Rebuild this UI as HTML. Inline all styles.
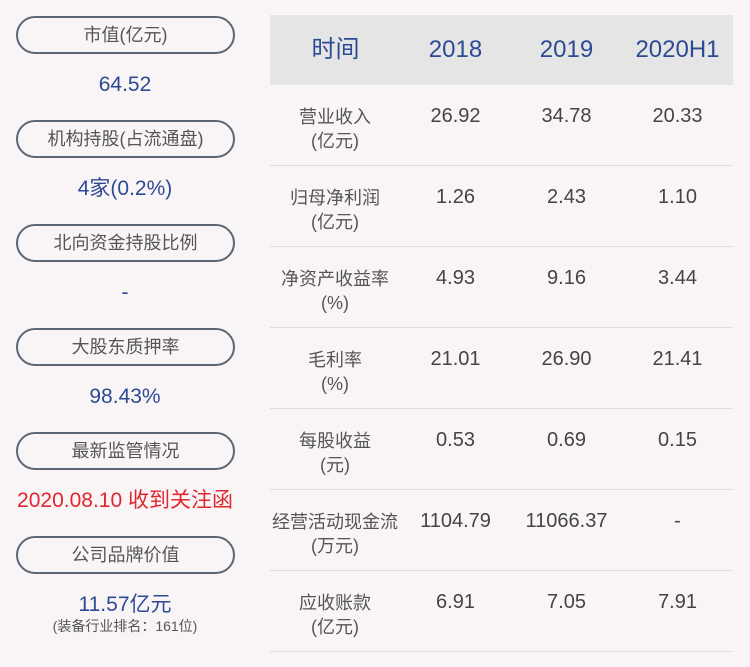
<!DOCTYPE html>
<html><head><meta charset="utf-8"><style>
body{margin:0;width:750px;height:667px;background:#f9f5f6;font-family:"Liberation Sans","Noto Sans CJK SC",sans-serif;position:relative;overflow:hidden}
.pill{position:absolute;left:16px;width:215px;height:34px;border:2px solid #5d6675;border-radius:19px;text-align:center;line-height:34px;font-size:18px;color:#555}
.val{position:absolute;left:0;width:250px;text-align:center;font-size:21px;line-height:24px;color:#2d4a94}
.hd{position:absolute;left:270px;top:15px;width:463px;height:70px;background:#e5e5e5}
.c{position:absolute;text-align:center;width:111px;line-height:30px}
.h{font-size:24px;color:#2d4a94;top:35px}
.row{position:absolute;left:270px;width:463px;height:80px;border-bottom:1px solid #e0dcdd}
.lab{position:absolute;left:0;width:130px;top:20px;text-align:center;font-size:18px;color:#555;line-height:24px}
.n{position:absolute;top:19px;width:111px;text-align:center;font-size:20px;line-height:24px;color:#444}
</style></head><body>
<div class="pill" style="top:16px">市值(亿元)</div>
<div class="val" style="top:73px">64.52</div>
<div class="pill" style="top:120px">机构持股(占流通盘)</div>
<div class="val" style="top:177px">4家(0.2%)</div>
<div class="pill" style="top:224px">北向资金持股比例</div>
<div class="val" style="top:281px">-</div>
<div class="pill" style="top:328px">大股东质押率</div>
<div class="val" style="top:385px">98.43%</div>
<div class="pill" style="top:432px">最新监管情况</div>
<div class="val" style="top:489px;color:#e0262e">2020.08.10 收到关注函</div>
<div class="pill" style="top:536px">公司品牌价值</div>
<div class="val" style="top:593px">11.57亿元</div>
<div class="val" style="top:617px;font-size:14px;line-height:18px;color:#555">(装备行业排名：161位)</div>
<div class="hd"></div>
<div class="c h" style="left:280px">时间</div>
<div class="c h" style="left:400px">2018</div>
<div class="c h" style="left:511px">2019</div>
<div class="c h" style="left:622px">2020H1</div>
<div class="row" style="top:85px"><div class="lab">营业收入<br>(亿元)</div><div class="n" style="left:130px">26.92</div><div class="n" style="left:241px">34.78</div><div class="n" style="left:352px">20.33</div></div>
<div class="row" style="top:166px"><div class="lab">归母净利润<br>(亿元)</div><div class="n" style="left:130px">1.26</div><div class="n" style="left:241px">2.43</div><div class="n" style="left:352px">1.10</div></div>
<div class="row" style="top:247px"><div class="lab">净资产收益率<br>(%)</div><div class="n" style="left:130px">4.93</div><div class="n" style="left:241px">9.16</div><div class="n" style="left:352px">3.44</div></div>
<div class="row" style="top:328px"><div class="lab">毛利率<br>(%)</div><div class="n" style="left:130px">21.01</div><div class="n" style="left:241px">26.90</div><div class="n" style="left:352px">21.41</div></div>
<div class="row" style="top:409px"><div class="lab">每股收益<br>(元)</div><div class="n" style="left:130px">0.53</div><div class="n" style="left:241px">0.69</div><div class="n" style="left:352px">0.15</div></div>
<div class="row" style="top:490px"><div class="lab">经营活动现金流<br>(万元)</div><div class="n" style="left:130px">1104.79</div><div class="n" style="left:241px">11066.37</div><div class="n" style="left:352px">-</div></div>
<div class="row" style="top:571px"><div class="lab">应收账款<br>(亿元)</div><div class="n" style="left:130px">6.91</div><div class="n" style="left:241px">7.05</div><div class="n" style="left:352px">7.91</div></div>
</body></html>
